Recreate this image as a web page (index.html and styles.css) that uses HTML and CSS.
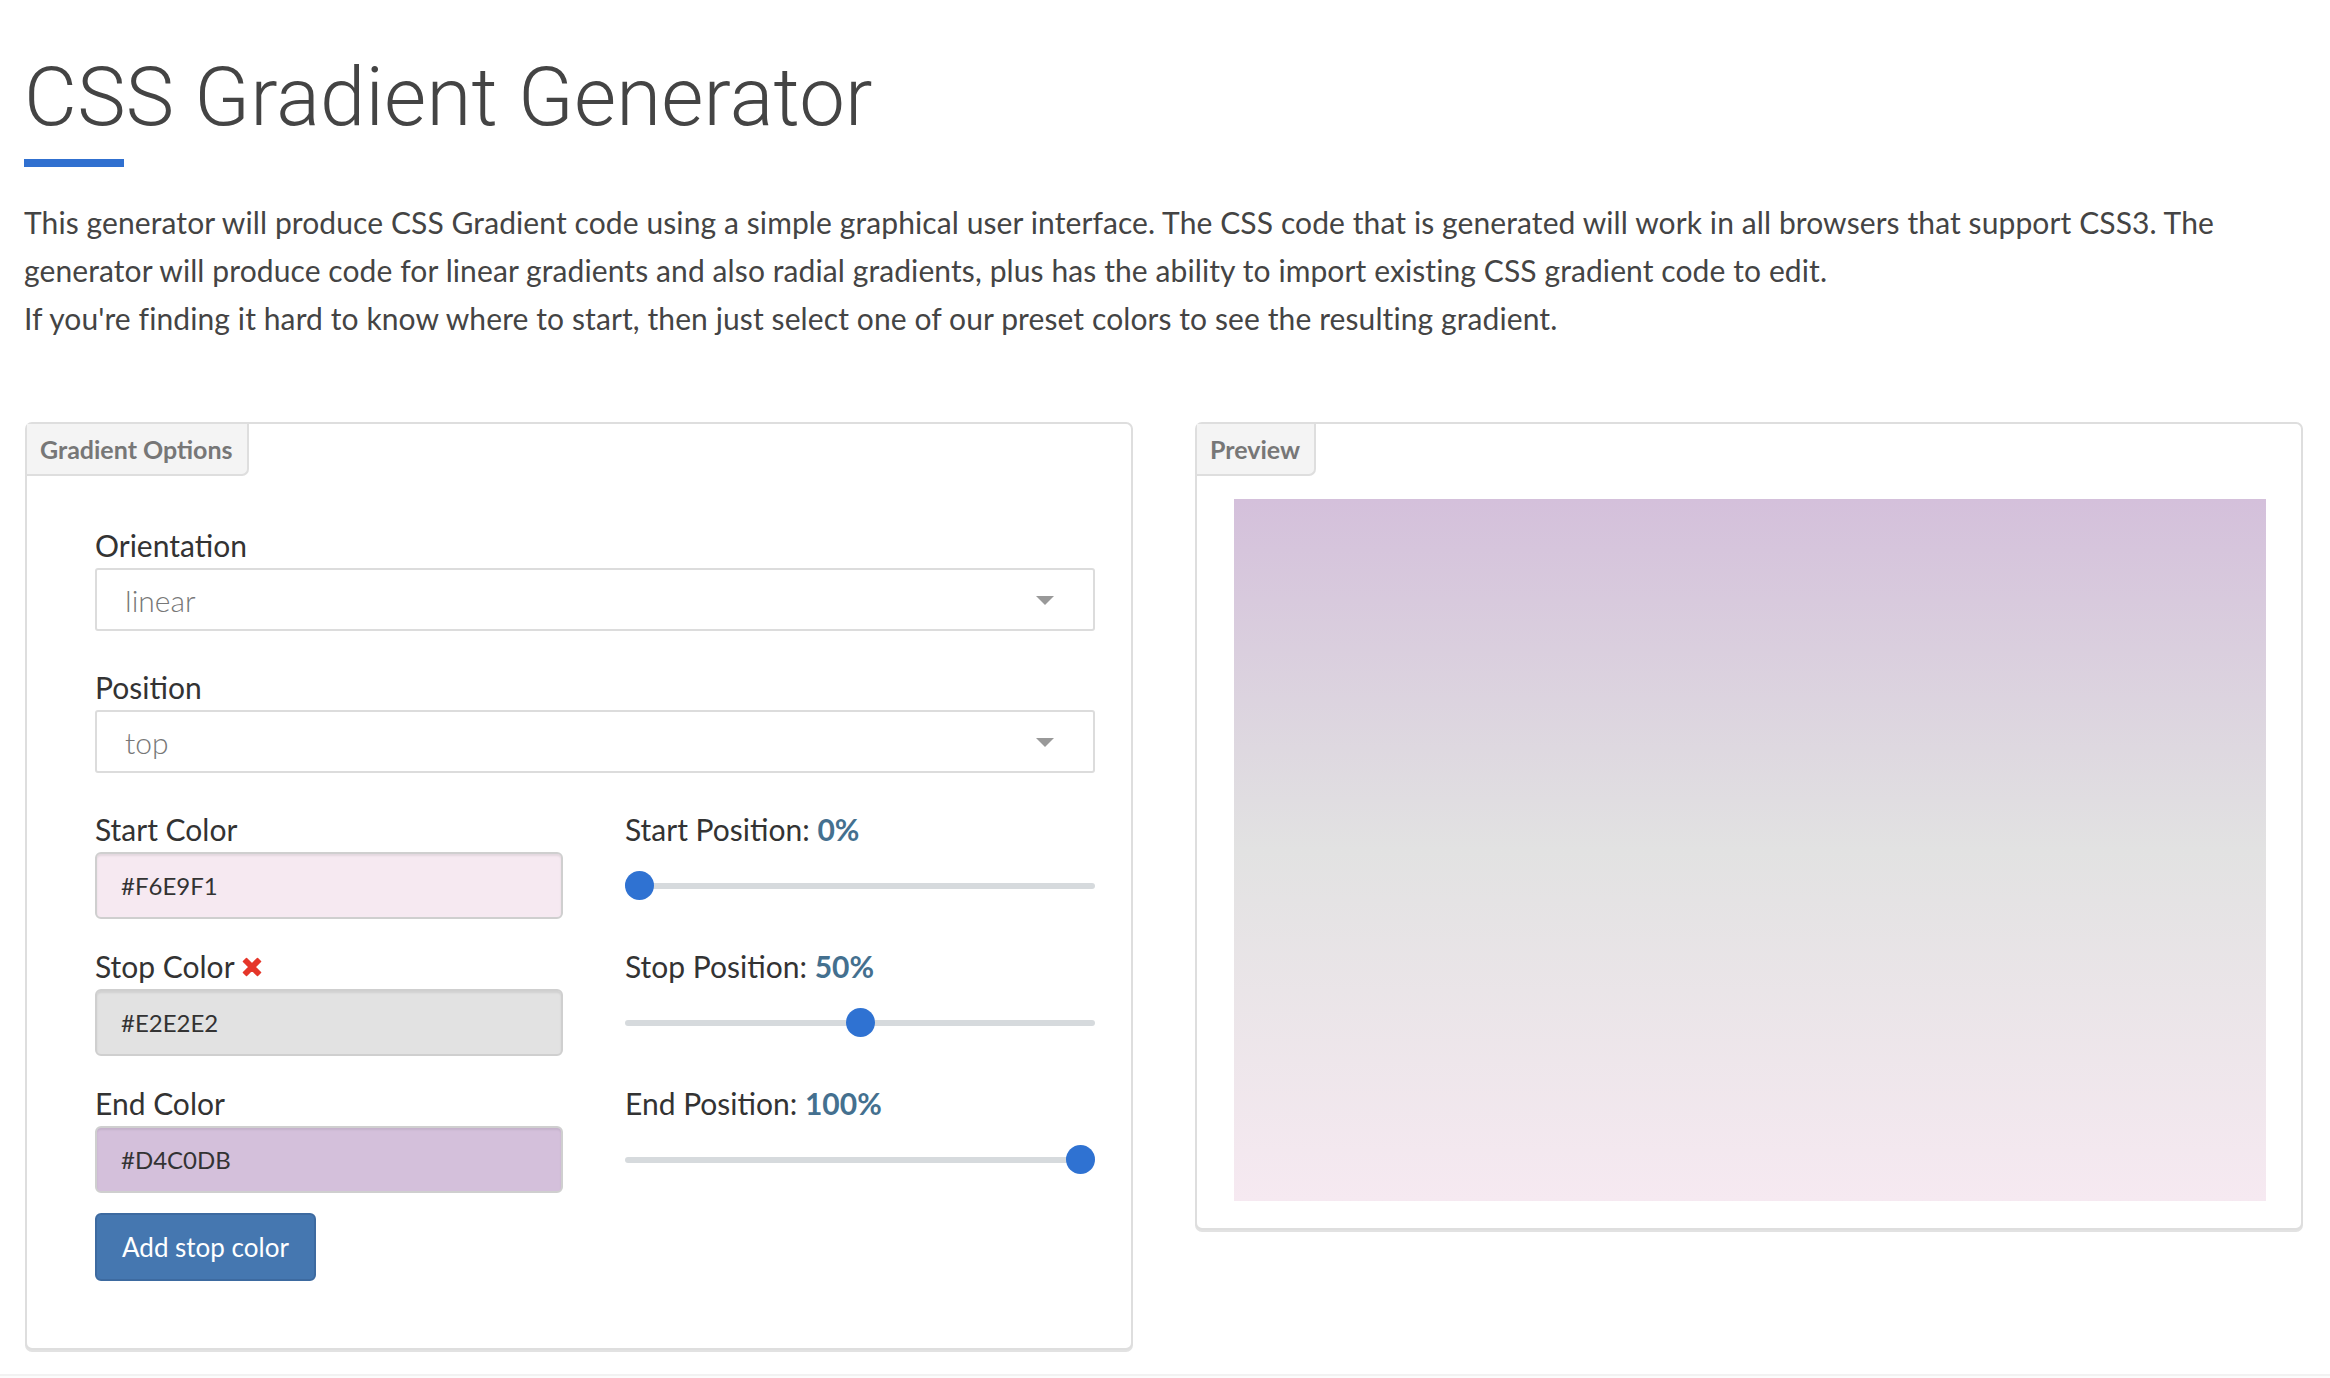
FILE: index.html
```html
<!DOCTYPE html>
<html lang="en">
<head>
<meta charset="utf-8">
<title>CSS Gradient Generator</title>
<link rel="stylesheet" href="styles.css">
</head>
<body>
<div class="page">
  <h1 class="title">CSS Gradient Generator</h1>
  <div class="title-bar"></div>
  <p class="intro">This generator will produce CSS Gradient code using a simple graphical user interface. The CSS code that is generated will work in all browsers that support CSS3. The<br>generator will produce code for linear gradients and also radial gradients, plus has the ability to import existing CSS gradient code to edit.<br>If you're finding it hard to know where to start, then just select one of our preset colors to see the resulting gradient.</p>

  <div class="panels">
    <section class="panel">
      <div class="tab">Gradient Options</div>
      <div class="options-body">
        <div class="field">
          <div class="label">Orientation</div>
          <div class="select"><span>linear</span><span class="caret"></span></div>
        </div>
        <div class="field">
          <div class="label">Position</div>
          <div class="select"><span>top</span><span class="caret"></span></div>
        </div>
        <div class="stops">
          <div class="stop-cell">
            <div class="label">Start Color</div>
            <div class="color-input" style="background:#F6E9F1">#F6E9F1</div>
          </div>
          <div class="stop-cell">
            <div class="label">Start Position: <b class="val">0%</b></div>
            <div class="slider"><div class="track"><div class="thumb" style="left:calc((100% - 29px) * 0)"></div></div></div>
          </div>
          <div class="stop-cell">
            <div class="label label-flex">Stop Color <svg class="remove" viewBox="0 0 22 22" width="22" height="22"><path d="M2.5 5.5 L5.5 2.5 L11 8 L16.5 2.5 L19.5 5.5 L14 11 L19.5 16.5 L16.5 19.5 L11 14 L5.5 19.5 L2.5 16.5 L8 11 Z" fill="#e5362a" stroke="#e5362a" stroke-width="1.6" stroke-linejoin="round"/></svg></div>
            <div class="color-input" style="background:#E2E2E2">#E2E2E2</div>
          </div>
          <div class="stop-cell">
            <div class="label">Stop Position: <b class="val">50%</b></div>
            <div class="slider"><div class="track"><div class="thumb" style="left:calc((100% - 29px) * 0.5)"></div></div></div>
          </div>
          <div class="stop-cell">
            <div class="label">End Color</div>
            <div class="color-input" style="background:#D4C0DB">#D4C0DB</div>
          </div>
          <div class="stop-cell">
            <div class="label">End Position: <b class="val">100%</b></div>
            <div class="slider"><div class="track"><div class="thumb" style="left:calc((100% - 29px) * 1)"></div></div></div>
          </div>
        </div>
        <button class="btn" type="button">Add stop color</button>
      </div>
    </section>

    <section class="panel">
      <div class="tab">Preview</div>
      <div class="preview-body">
        <div class="preview"></div>
      </div>
    </section>
  </div>
</div>
<div class="footer"></div>
</body>
</html>
```

FILE: styles.css
```css
html, body {
  margin: 0;
  padding: 0;
  background: #fff;
}
body {
  font-family: Lato, "Open Sans", "Liberation Sans", sans-serif;
  color: #333;
}
.page {
  padding: 0 27px 0 24px;
}
.title {
  font-family: Roboto, "Liberation Sans", sans-serif;
  font-weight: 300;
  font-size: 81.5px;
  line-height: 88px;
  color: #444;
  margin: 53px 0 0 0;
  letter-spacing: 0.2px;
}
.title-bar {
  width: 100px;
  height: 8px;
  background: #3070d0;
  margin-top: 18px;
}
.intro {
  margin: 31px 0 0 0;
  font-size: 30px;
  line-height: 48px;
  letter-spacing: 0.1px;
  color: #444;
}
.panels {
  display: grid;
  grid-template-columns: 1fr 1fr;
  column-gap: 62px;
  align-items: start;
  margin-top: 80px;
  padding-left: 1px;
}
.panel {
  border: 2px solid #dedede;
  border-radius: 7px;
  box-shadow: 0 2px 0 #e2e2e2;
  background: #fff;
}
.tab {
  display: inline-block;
  vertical-align: top;
  height: 50px;
  line-height: 50px;
  padding: 0 14px 0 13px;
  background: #f4f4f4;
  border-right: 2px solid #dedede;
  border-bottom: 2px solid #dedede;
  border-bottom-right-radius: 7px;
  font-weight: 700;
  font-size: 25px;
  color: #777;
}
.options-body {
  padding: 49px 36px 67px 68px;
}
.field {
  margin-bottom: 36px;
}
.label {
  font-size: 30px;
  line-height: 40px;
  color: #333;
  margin-bottom: 3px;
  white-space: nowrap;
}
.label-flex {
  display: flex;
  align-items: center;
  gap: 6px;
}
.label .val {
  color: #44708f;
  font-weight: 700;
}
.remove {
  display: block;
  margin-top: 1px;
}
.select {
  height: 59px;
  border: 2px solid #dcdcdc;
  border-radius: 3px;
  display: flex;
  align-items: center;
  justify-content: space-between;
  padding: 0 39px 0 28px;
  font-size: 30px;
  font-weight: 300;
  color: #777;
}
.caret {
  width: 0;
  height: 0;
  border-left: 9px solid transparent;
  border-right: 9px solid transparent;
  border-top: 9px solid #999;
  margin-top: 2px;
}
.stops {
  display: grid;
  grid-template-columns: 468px 470px;
  column-gap: 62px;
  row-gap: 27px;
}
.color-input {
  height: 63px;
  border: 2px solid #cfcfcf;
  border-radius: 6px;
  box-shadow: inset 0 2px 2px rgba(0,0,0,0.08);
  display: flex;
  align-items: center;
  padding-left: 24px;
  font-size: 24px;
  color: #333;
}
.slider {
  height: 67px;
  display: flex;
  align-items: center;
}
.track {
  position: relative;
  width: 100%;
  height: 6px;
  border-radius: 3px;
  background: #d6dadd;
}
.thumb {
  position: absolute;
  top: -12px;
  width: 29px;
  height: 29px;
  border-radius: 50%;
  background: #2f72d2;
}
.btn {
  margin-top: 20px;
  height: 68px;
  padding: 0 25px;
  background: #4577b0;
  border: 2px solid #3d6aa0;
  border-radius: 6px;
  color: #fff;
  font-family: Lato, "Open Sans", sans-serif;
  font-size: 26px;
  line-height: 1;
}
.preview-body {
  padding: 23px 35px 27px 37px;
}
.preview {
  height: 702px;
  background: linear-gradient(to top, #F6E9F1 0%, #E2E2E2 50%, #D4C0DB 100%);
}
.footer {
  margin-top: 24px;
  height: 10px;
  border-top: 2px solid #f2f2f2;
  background: #fcfcfc;
}
```
